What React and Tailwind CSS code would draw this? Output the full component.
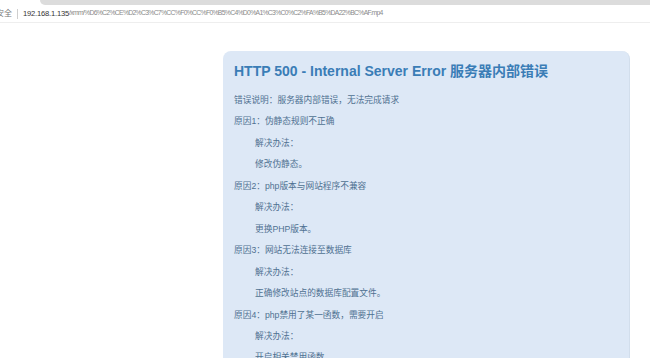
const lines = [
  { t: '错误说明：服务器内部错误，无法完成请求' },
  { t: '原因1：伪静态规则不正确' },
  { t: '解决办法：', i: true },
  { t: '修改伪静态。', i: true },
  { t: '原因2：php版本与网站程序不兼容' },
  { t: '解决办法：', i: true },
  { t: '更换PHP版本。', i: true },
  { t: '原因3：网站无法连接至数据库' },
  { t: '解决办法：', i: true },
  { t: '正确修改站点的数据库配置文件。', i: true },
  { t: '原因4：php禁用了某一函数，需要开启' },
  { t: '解决办法：', i: true },
  { t: '开启相关禁用函数', i: true },
];

export default function App() {
  return (
    <div className="w-[650px] h-[358px] overflow-hidden bg-white font-['Liberation_Sans','Noto_Sans_CJK_SC',sans-serif]">
      {/* browser chrome */}
      <div className="h-[5px] flex">
        <div className="w-[40px]" />
        <div className="flex-1 bg-[#dcdcdc] rounded-bl-[6px]" />
      </div>
      <div className="h-[18px] flex items-center border-b border-[#eeeeee] leading-none">
        <span className="text-[8px] text-[#777] ml-[-4px]">安全</span>
        <span className="mx-[5px] w-px h-[10px] bg-[#cfcfcf]" />
        <span className="text-[7.6px] tracking-[-0.2px] text-[#333]">192.168.1.135</span>
        <span className="text-[6.8px] tracking-[-0.68px] text-[#8a8a8a]">/xmm/%D6%C2%CE%D2%C3%C7%CC%F0%CC%F0%B5%C4%D0%A1%C3%C0%C2%FA%B5%DA22%BC%AF.mp4</span>
      </div>

      <div className="flex pt-[28px]">
        <div className="w-[223px]" />
        <div className="w-[407px] bg-[#dde8f6] rounded-t-[8px] border-r border-[#d2deec] pl-[11px] pt-[10px] h-[320px]">
          <h1 className="text-[14px] font-bold text-[#3a7db6] leading-[20px]">
            HTTP 500 - Internal Server Error 服务器内部错误
          </h1>
          <div className="mt-[9px] text-[8.7px] text-[#4f7191]">
            {lines.map((l, idx) => (
              <p key={idx} className={`leading-[21.45px] ${l.i ? 'pl-[21px]' : ''}`}>
                {l.t}
              </p>
            ))}
          </div>
        </div>
      </div>
    </div>
  );
}
